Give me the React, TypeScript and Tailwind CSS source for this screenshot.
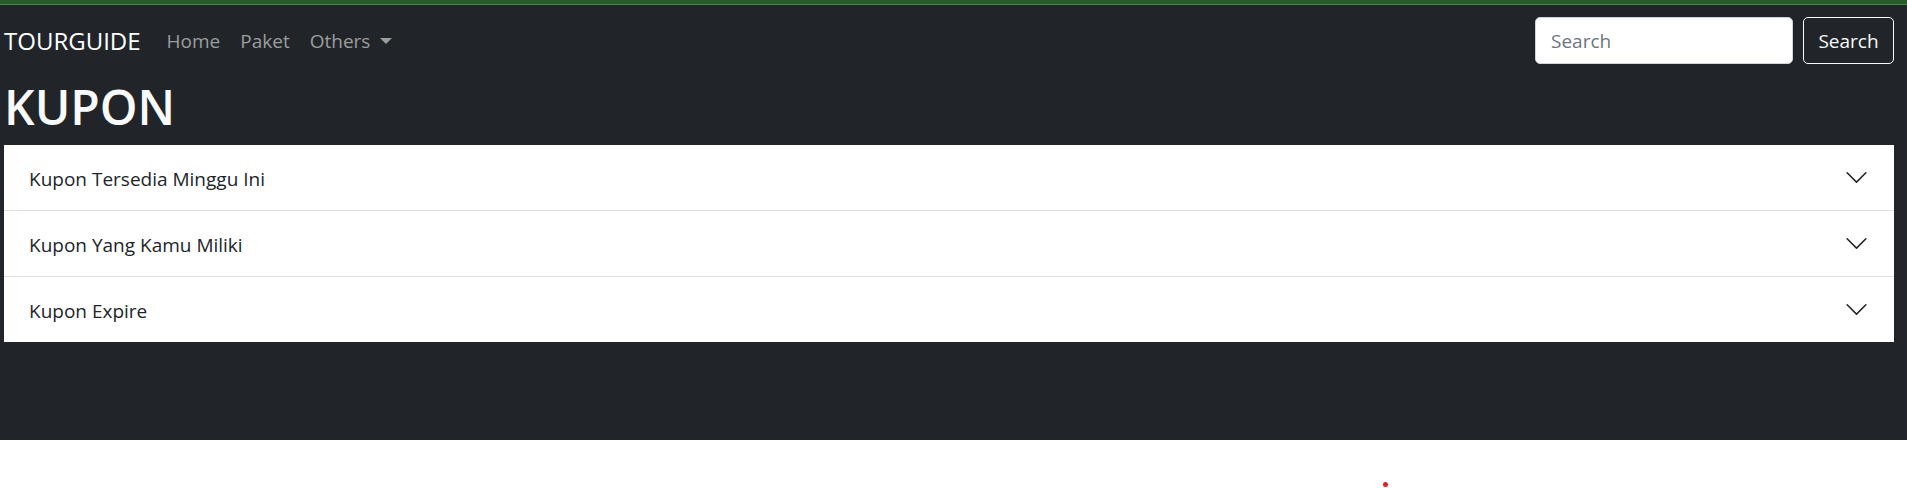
const navLinks = ["Home", "Paket"];

const coupons = ["Kupon Tersedia Minggu Ini", "Kupon Yang Kamu Miliki", "Kupon Expire"];

function Chevron() {
  return (
    <svg className="size-[25px] shrink-0" viewBox="0 0 16 16" fill="#212529" aria-hidden="true">
      <path
        fillRule="evenodd"
        d="M1.646 4.646a.5.5 0 0 1 .708 0L8 10.293l5.646-5.647a.5.5 0 0 1 .708.708l-6 6a.5.5 0 0 1-.708 0l-6-6a.5.5 0 0 1 0-.708z"
      />
    </svg>
  );
}

function Navbar() {
  return (
    <nav className="flex items-center pt-3 pb-[10px] pr-[9px]">
      <a href="#" className="mr-4 text-2xl leading-[38px] text-white">
        TOURGUIDE
      </a>
      <div className="flex flex-1 items-center text-[19px] leading-[30px] text-[#9b9d9e]">
        {navLinks.map((label) => (
          <a key={label} href="#" className="px-[10px]">
            {label}
          </a>
        ))}
        <button type="button" className="flex items-center gap-[10px] px-[10px]">
          Others
          <svg className="h-[6px] w-3" viewBox="0 0 12 6" fill="currentColor" aria-hidden="true">
            <path d="M0 0h12L6 6z" />
          </svg>
        </button>
      </div>
      <form className="flex gap-[10px]" role="search" onSubmit={(e) => e.preventDefault()}>
        <input
          type="search"
          aria-label="Search"
          placeholder="Search"
          className="h-[47px] w-[258px] rounded-[5px] border border-[#ced4da] bg-white px-[15px] text-[19px] text-[#212529] placeholder:text-[#6c757d]"
        />
        <button
          type="submit"
          className="h-[47px] w-[91px] rounded-[5px] border border-[#f8f9fa] pt-[2px] text-[19px] text-[#f8f9fa]"
        >
          Search
        </button>
      </form>
    </nav>
  );
}

export default function App() {
  return (
    <div className="bg-white font-['Open_Sans','Noto_Sans',sans-serif]">
      <div className="h-[5px] border-b border-[#4e8052] bg-[#285c2b]" />
      <div className="bg-[#212529] pr-1 pb-[98px] pl-1">
        <Navbar />
        <main className="pr-[9px]">
          <h1 className="pt-[3px] pb-2 text-5xl leading-[60px] font-semibold text-[#f8f9fa]">KUPON</h1>
          <div className="divide-y divide-[#dfdfdf] bg-white">
            {coupons.map((title) => (
              <button
                key={title}
                type="button"
                aria-expanded={false}
                className="flex w-full items-start justify-between px-[25px] py-5 text-left text-[19px] leading-[25px] text-[#212529]"
              >
                <span className="-mb-[2px] pt-[2px]">{title}</span>
                <Chevron />
              </button>
            ))}
          </div>
        </main>
      </div>
      <div className="flex h-12 items-end justify-center">
        <span className="relative left-[432px] mb-[1px] size-[5px] rounded-full bg-[#e81c23]" />
      </div>
    </div>
  );
}
